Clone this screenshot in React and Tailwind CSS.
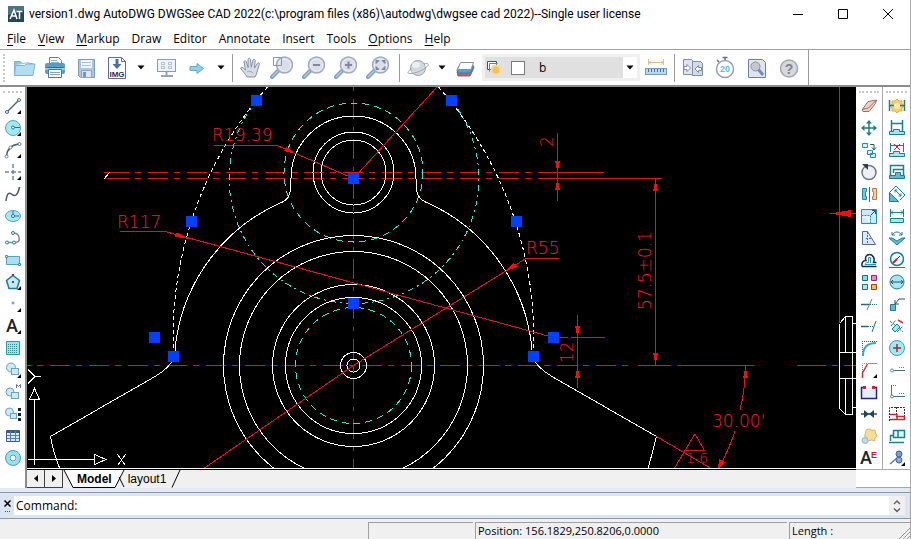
import React, { useState } from 'react';

const navy = '#4a6488';
const slate = '#6b7f9b';
const teal = '#1f7d8c';
const aqua = '#a5e6f5';
const sky = '#5cb8dc';

const Icon = ({ size = 18, children }) => (
  <svg
    width={size}
    height={size}
    viewBox={`0 0 ${size} ${size}`}
    fill="none"
    stroke={slate}
    className="shrink-0 overflow-visible"
    aria-hidden="true"
  >
    {children}
  </svg>
);

const Flyout = () => <path d="M17 13v4h-4z" fill="#000" stroke="none" />;

const Caret = () => (
  <svg width="8" height="5" viewBox="0 0 8 5" aria-hidden="true">
    <path d="M0.5 0.5h7L4 4.5z" fill="#000" />
  </svg>
);

const Lens = ({ children }) => (
  <Icon size={26}>
    <path d="M3 22l7-7" stroke="#7d9cc0" strokeWidth="4" strokeLinecap="round" />
    <path d="M3 22l6-6" stroke="#b4cbe3" strokeWidth="1.5" />
    <circle cx="15.5" cy="10" r="8" fill="#d8dde7" stroke="#a3aab8" strokeWidth="1.5" />
    <circle cx="15.5" cy="10" r="6" stroke="#eef1f6" />
    {children}
  </Icon>
);

/* ---------- main toolbar ---------- */

const FolderIcon = () => (
  <Icon size={26}>
    <path d="M3.5 20.5v-14h6l2 2h10v12z" fill="#8cc7e6" stroke="#7fb2d4" />
    <path d="M5 9.5l13-2v4H5z" fill="#f2f8fc" stroke="#9cc5df" />
    <path d="M3.5 20.5l1-10h9l1.5-1.5h9l-2 11.5z" fill="#b2def3" stroke="#7ab5d8" />
  </Icon>
);

const PrinterIcon = () => (
  <Icon size={26}>
    <path d="M7.5 9V2.5h9l3 3V9" fill="#fff" stroke="#5c86a8" />
    <path d="M9 5.5h6M9 7.5h8" stroke="#8fb4d0" />
    <rect x="3" y="8" width="20" height="11" rx="2" fill="#5b9cc3" stroke="none" />
    <rect x="3" y="13" width="20" height="2" fill="#8cd0ee" stroke="none" />
    <path d="M4.5 12.5h17" stroke="#3b6888" />
    <path d="M6.5 14.5h13v8h-13z" fill="#fff" stroke="#5d7389" />
    <path d="M8 17.5h10M8 19.5h10" stroke="#8d9eb0" />
  </Icon>
);

const SaveIcon = () => (
  <Icon size={26}>
    <path d="M5.5 4.5h16v18h-14l-2-2z" fill="#aac7e0" stroke="#7f98b5" />
    <rect x="8" y="5" width="11" height="8" fill="#f3f6f9" stroke="none" />
    <path d="M9 7.5h9M9 10.5h9" stroke="#b4c0cc" />
    <path d="M8.5 15.5h10v7h-10z" fill="#dde6ee" stroke="#8fa4bb" />
    <rect x="10" y="17" width="3" height="5" fill="#7396b8" stroke="none" />
  </Icon>
);

const ImageExportIcon = () => (
  <Icon size={26}>
    <path d="M4.5 2.5h13l4 4v17h-17z" fill="#fff" stroke="#5e6f8f" />
    <path d="M17.5 2.5v4h4" stroke="#5e6f8f" />
    <path d="M13 4v6" stroke="#4b6fa5" strokeWidth="3" />
    <path d="M8.5 9h9L13 14z" fill="#4b6fa5" stroke="none" />
    <text x="13" y="22" textAnchor="middle" fontSize="8" fill="#1d3260" stroke="none" className="font-['Liberation_Sans'] font-bold">IMG</text>
  </Icon>
);

const MonitorIcon = () => (
  <Icon size={26}>
    <rect x="4.5" y="4.5" width="18" height="12" fill="#edf2f8" stroke="#8c9bb2" />
    <path d="M13.5 17v4M8 21h12" stroke="#94a2b7" strokeWidth="2" />
    <path d="M8.5 7.5h3v2h-3zM15.5 7.5h3v2h-3zM8.5 11.5h3v2h-3zM15.5 11.5h3v2h-3z" stroke="#8794a9" strokeDasharray="1 1" />
  </Icon>
);

const ArrowIcon = () => (
  <Icon size={26}>
    <path d="M6 11.5h7V8.5l6.5 5-6.5 5v-3H6z" fill="#8dd3f1" stroke="#6aa6cb" />
  </Icon>
);

const HandIcon = () => (
  <Icon size={26}>
    <path
      d="M9 22c-1-3-5-6-6.5-9 1.5-1.5 3.5.5 5 2L6 7c.2-2 2-1.5 2.4 0l1.8 5.5L10 4.5c.3-1.8 2.2-1.5 2.5 0l.8 7.8 1.6-7c.5-1.6 2.4-1.2 2.3.4L16.5 13l2.8-4.6c1-1.3 2.5-.4 2 1L19 17c-.5 2-1 3.5-2 5z"
      fill="#d6dbe5"
      stroke="#8690a6"
    />
    <path d="M9 17c2-1 4-1 6 1" stroke="#a0a9ba" />
  </Icon>
);

const PlanetIcon = () => (
  <Icon size={26}>
    <circle cx="13" cy="13" r="7.5" fill="#d2d6de" stroke="#9ba1af" />
    <ellipse cx="11" cy="10" rx="4" ry="3" fill="#eceef2" stroke="none" />
    <path d="M6 14c-4 3-4 5 0 4.5 6-.5 15-5 17-8 1-2-1-2.5-4-1.5" stroke="#9ba1af" />
    <path d="M6 17c6 0 11-3 15-6" stroke="#dfe2e8" />
  </Icon>
);

const EraserLayerIcon = () => (
  <Icon size={26}>
    <path d="M3 17l3-5h14l-2 5-2 4H4z" fill="#b5626c" stroke="#9b5a66" />
    <path d="M3 15l2-4h15l-2 4-2 3H4z" fill="#4fa4cf" stroke="#3b7fa8" />
    <path d="M3.5 14.5l3-7h13l-2.5 7z" fill="#fff" stroke="#7a93ac" />
  </Icon>
);

const RulerIcon = () => (
  <Icon size={26}>
    <path d="M5.5 4v6M20.5 4v6M6 7.5h14M8 5.5l-2 2 2 2M18 5.5l2 2-2 2" stroke="#e5b98b" />
    <rect x="2.5" y="13.5" width="21" height="6" fill="#b3dbf2" stroke="#7c98c2" />
    <path d="M5.5 14v3M8.5 14v3M11.5 14v3M14.5 14v3M17.5 14v3M20.5 14v3" stroke="#4e6fa3" />
  </Icon>
);

const CompareIcon = () => (
  <Icon size={26}>
    <path d="M3.5 4.5h8l1 1v14h-9z" fill="#dfe5ee" stroke="#7f8eaa" />
    <path d="M12.5 6.5h8l2 2v12h-10z" fill="#d3dbe7" stroke="#7f8eaa" />
    <path d="M4 11.5h3v-2l3.5 3.5L7 16.5v-2H4z" fill="#fff" stroke="#7f8eaa" />
    <path d="M21.5 12.5h-3v-2L15 14l3.5 3.5v-2h3z" fill="#fff" stroke="#7f8eaa" />
  </Icon>
);

const StopwatchIcon = () => (
  <Icon size={26}>
    <path d="M13 2v3M10.5 2.5h5M5 5l2 2" stroke="#66738c" strokeWidth="1.5" />
    <circle cx="13" cy="14" r="8.5" fill="#fff" stroke="#95a0b4" strokeWidth="1.5" />
    <text x="13" y="17" textAnchor="middle" fontSize="9" fill="#5fbcec" stroke="none" className="font-['Liberation_Sans'] font-bold">20</text>
  </Icon>
);

const FindIcon = () => (
  <Icon size={26}>
    <path d="M4.5 4.5h14l3 3v15h-17z" fill="#dfe4ed" stroke="#6e7fa0" />
    <path d="M14 14l5 6" stroke="#6a90bd" strokeWidth="3" />
    <circle cx="11.5" cy="11.5" r="4.5" fill="#c3c7d0" stroke="#8b92a2" />
  </Icon>
);

const HelpIcon = () => (
  <Icon size={26}>
    <circle cx="13" cy="13.5" r="8.5" fill="#d6d8dd" stroke="#a5a7b0" strokeWidth="1.5" />
    <text x="13" y="19" textAnchor="middle" fontSize="14" fill="#7f8390" stroke="none" className="font-['Liberation_Sans'] font-bold">?</text>
  </Icon>
);

const LayerIcon = () => (
  <Icon size={18}>
    <path d="M2.5 2.5h9v8h-9z" fill="#fff" stroke="#40536f" />
    <path d="M4.5 12.5v-8h8" stroke="#6b7c96" />
    <circle cx="11" cy="11" r="5.5" fill="#f6dc9b" stroke="none" />
    <circle cx="11" cy="11" r="3.5" fill="#efc25f" stroke="none" />
  </Icon>
);

/* ---------- side toolbars, one entry per button ---------- */

const drawTools = [
  ['Line', <><path d="M3.5 14.5l11-11" stroke={navy} strokeWidth="1.5" /><circle cx="3" cy="15" r="1.5" fill="#fff" stroke={navy} /><circle cx="15" cy="3" r="1.5" fill="#fff" stroke={navy} /><Flyout /></>],
  ['Circle', <><circle cx="9" cy="9" r="7.5" fill="#9cecf8" stroke="#5f9fb8" /><path d="M9 8.5h7" stroke={navy} /><circle cx="9" cy="8.5" r="1.5" fill="#fff" stroke={navy} /><Flyout /></>],
  ['Arc', <><path d="M2.5 15C3 9 7 4 15 3" stroke="#555b6b" strokeWidth="1.5" /><circle cx="2.5" cy="15.5" r="1.5" fill="#fff" /><circle cx="6.5" cy="6.5" r="1.5" fill="#fff" /><circle cx="15.5" cy="3" r="1.5" fill="#fff" /><Flyout /></>],
  ['Center mark', <><path d="M1 9h4M7 9h5M14 9h3M9 1v4M9 7v4M9 13v4" stroke="#77829a" strokeWidth="1.5" /><Flyout /></>],
  ['Spline', <path d="M2 16C3 8 5 7 8 9.5S14 10 15.5 2" stroke="#4d566b" strokeWidth="1.5" />],
  ['Ellipse', <><ellipse cx="9" cy="9" rx="7.5" ry="5.5" fill="#9cecf8" stroke="#5f9fb8" /><path d="M9 9V4M9 9h6" stroke={navy} /><circle cx="9" cy="9" r="1.5" fill="#fff" stroke={navy} /></>],
  ['Polyline', <><path d="M3 13.5h9c5-1 4-9-2-9.5" stroke="#858b9f" strokeWidth="1.5" /><circle cx="3" cy="13.5" r="1.5" fill="#fff" stroke={teal} /><circle cx="10" cy="13.5" r="1.5" fill="#fff" stroke={teal} /><circle cx="9" cy="4" r="1.5" fill="#fff" stroke={teal} /></>],
  ['Rectangle', <><path d="M2.5 5.5h13v8h-13z" fill="#addcf3" stroke="#4aa5bd" /><path d="M1.5 4.5h2v2h-2zM14.5 12.5h2v2h-2z" fill="#fff" stroke="#2b9ab6" /></>],
  ['Polygon', <><path d="M9 2.5l6.5 5-2.5 8H5l-2.5-8z" fill="#bdeef8" stroke={teal} strokeWidth="1.5" /><path d="M8 1h2v2H8zM8 8h2v2H8z" fill="#c21e2c" stroke="none" /><Flyout /></>],
  ['Point', <><circle cx="9" cy="8" r="1" /><Flyout /></>],
  ['Text', <><text x="8" y="15" textAnchor="middle" fontSize="18" fill="#222" stroke="none" className="font-['Roboto'] font-medium">A</text><Flyout /></>],
  ['Hatch', <><path d="M2.5 2.5h13v13h-13z" fill="#8eeaf0" stroke="#2a9aa3" /><path d="M4 5.5h10M4 7.5h10M4 9.5h10M4 11.5h10M4 13.5h10" stroke="#3b8893" strokeDasharray="1 1" /></>],
  ['Block', <><circle cx="7" cy="6.5" r="4.5" fill="#c9eaf8" stroke="#6ea1c4" /><rect x="7.5" y="7.5" width="7" height="6" fill="#c9eaf8" stroke="#6ea1c4" /><Flyout /></>],
  ['Make block', <><circle cx="6" cy="9" r="4" fill="#c9eaf8" stroke="#6ea1c4" /><rect x="7.5" y="9.5" width="7" height="6" fill="#c9eaf8" stroke="#6ea1c4" /><path d="M12.5 5V1.5l2 2 2-2V5" stroke="#5d7391" /></>],
  ['Block attribute', <><circle cx="5.5" cy="7" r="4" fill="#c9eaf8" stroke="#6ea1c4" /><rect x="6.5" y="8.5" width="6" height="5" fill="#c9eaf8" stroke="#6ea1c4" /><path d="M14 3h3v3h-3zM14 8h3v3h-3zM14 13h3v3h-3z" fill="#222" stroke="none" /></>],
  ['Table', <><path d="M2.5 3.5h13v11h-13z" fill="#d6ebfa" stroke="#3d5b86" /><path d="M3 5h12" stroke="#3d5b86" strokeWidth="2" /><path d="M6.5 4v10M11.5 4v10M3 8.5h12M3 11.5h12" stroke="#5780b0" /></>],
  ['Donut', <><circle cx="9" cy="9" r="5.5" stroke="#8fe4f0" strokeWidth="4" /><circle cx="9" cy="9" r="7.5" stroke="#5298b3" /><circle cx="9" cy="9" r="3" fill="#fff" stroke="#5298b3" /></>],
];

const modifyTools = [
  ['Erase', <><path d="M2 13l6-8.5L16.5 3l-1 3.5-6.5 8H3z" fill="#f3cfc2" stroke="#94706a" /><path d="M2 12.5l6.5-1.5L16 3.5" stroke="#94706a" /></>],
  ['Move', <><path d="M9 3v12M3 9h12" stroke={teal} strokeWidth="1.5" /><path d="M9 1l3 3.5H6zM9 17l3-3.5H6zM1 9l3.5-3v6zM17 9l-3.5-3v6z" fill={teal} stroke="none" /></>],
  ['Copy', <><path d="M2.5 2.5h5v4h-5zM7.5 9.5h5v4h-5zM10.5 12.5h5v4h-5z" fill="#d4f2fb" stroke="#2a8ba2" /><path d="M10 3.5h4v5M12 6.5l2 2.5 2-2.5" stroke="#24556d" /></>],
  ['Rotate', <><circle cx="9" cy="9.5" r="7" fill="#eef0f5" stroke="#6b7890" strokeWidth="1.5" /><path d="M2 1h6v6z" fill="#2c3d55" stroke="none" /></>],
  ['Mirror', <><path d="M2.5 3.5h4v3h-1v5h1v3h-4z" fill="#67c9ed" stroke="#2786a8" /><path d="M16.5 3.5h-4v3h1v5h-1v3h4z" fill="#f6d08f" stroke="#b97a55" /><path d="M9.5 2v15" stroke="#4c6175" /></>],
  ['Scale', <><path d="M1.5 2.5h15v14h-15z" fill="#c5edf9" stroke="#278ea5" /><path d="M1.5 8.5h9v8" fill="#e9f1fa" stroke="#278ea5" strokeDasharray="2 1" /><path d="M11 8l4-4M12 3.5h3.5v3.5" stroke="#24556d" /></>],
  ['Stretch', <><path d="M2.5 15.5v-13h5l8 13z" fill="#d8eaf5" stroke="#506c8d" /><path d="M7.5 3v12M6 9.5h5" stroke="#506c8d" strokeDasharray="2 1" /></>],
  ['Offset', <><path d="M2 15.5h14.5M16.5 11.5h-3c2-4-1-8-4-8s-5 3-3.5 6c-3 0-4.5 2-4 6" stroke="#152a49" strokeWidth="1.5" /><path d="M16 13.5H5c0-1.5 1-2 3.5-2V6.5h2V12" stroke="#2b9ab6" /></>],
  ['Array', <><path d="M2.5 2.5h5v5h-5z" fill="#82dff0" stroke="#206b7d" /><path d="M11.5 2.5h5v5h-5z" fill="#fb7fc2" stroke="#8d2c62" /><path d="M2.5 11.5h5v5h-5z" fill="#b9e4ee" stroke="#206b7d" /><path d="M11.5 11.5h5v5h-5z" fill="#f7ba57" stroke="#8a4b1e" /></>],
  ['Trim', <><path d="M1 9.5h8" stroke="#2d647f" strokeWidth="1.5" /><path d="M10 9.5h7" stroke="#2d647f" strokeDasharray="1 1" /><path d="M12 4l-5 11" stroke="#5b8398" /></>],
  ['Extend', <><path d="M1 9.5h7" stroke="#2d647f" strokeWidth="1.5" /><path d="M8 9.5h6" stroke="#2d647f" strokeDasharray="1 1" /><path d="M16 4l-4 11" stroke="#2d647f" /></>],
  ['Fillet', <><path d="M2.5 17V2.5H17" stroke="#2d647f" strokeDasharray="1 1" /><path d="M3 17c0-9 5-13 13-13" stroke="#3ea9b7" strokeWidth="2" /></>],
  ['Chamfer', <><path d="M2.5 17V2.5H17" stroke="#888" strokeDasharray="1 1" /><path d="M2.5 17v-5l5-9" stroke="#c4323f" strokeWidth="1.5" /><path d="M8 2.5h9" stroke="#c9737b" /><Flyout /></>],
  ['Break', <><path d="M5 4.5H1.5v11h15v-11H13" fill="#e4eefa" stroke="#1c2b7e" strokeWidth="1.5" /><path d="M3 3h3v3H3zM12 3h3v3h-3z" fill="#dc1f2c" stroke="none" /></>],
  ['Join', <><path d="M1 9h16" stroke="#2c4a59" strokeWidth="1.5" /><path d="M4 5l5 4-5 4zM14 5L9 9l5 4z" fill="#1f4654" stroke="none" /></>],
  ['Explode', <><path d="M10 2l2 1.5 3-.5.5 3 1.5 3-2 2-.5 3-3-1-3 1-2-3-2-2 1-3 1-3.5z" fill="#f9dc96" stroke="#dfb262" /><circle cx="5" cy="13.5" r="3" fill="#b8def0" stroke="#94b6cb" /></>],
  ['Edit text', <><text x="6" y="15" textAnchor="middle" fontSize="18" fill="#222" stroke="none" className="font-['Roboto'] font-medium">A</text><text x="14" y="9" textAnchor="middle" fontSize="9" fill="#c71f2b" stroke="none" className="font-['Liberation_Sans'] font-bold">E</text></>],
];

const dimensionTools = [
  ['Smart dimension', <><path d="M9 2l2 2h3v3l2 2-2 2v3h-3l-2 2-2-2H4v-3L2 9l2-2V4h3z" fill="#f8cf6d" stroke="#dfae4e" /><circle cx="9" cy="9" r="3" fill="#fdeab5" stroke="none" /><path d="M1.5 3v11M16.5 3v11M2 8.5h4M12 8.5h4" stroke={teal} strokeWidth="1.5" /></>],
  ['Linear', <><path d="M3.5 1v11M14.5 1v11M4 4.5h10" stroke={teal} strokeWidth="1.5" /><path d="M1.5 15.5v-3h4v-2h6v2h5v3z" fill={aqua} stroke={teal} /></>],
  ['Break dimension', <><path d="M2.5 2v9M15.5 2v9M3 4.5h12" stroke={teal} /><path d="M6 3l6 6M12 3L6 9" stroke="#b6303a" /><path d="M1.5 15.5v-3h4v-2h6v2h5v3z" fill={aqua} stroke={teal} /></>],
  ['Baseline', <><path d="M2.5 12V2.5H15.5V12M5.5 10V6.5h10" stroke={teal} strokeWidth="1.5" /><path d="M1.5 15.5v-3h6v-3h5v3h4v3z" fill={sky} stroke={teal} /></>],
  ['Aligned', <><path d="M1.5 7.5l9 9h-9z" fill={sky} stroke={teal} /><path d="M2 7l6-6 9 9-5 5M7 5l6 6M7 7.5V5h2.5M10.5 11H13V8.5" stroke={teal} /></>],
  ['Ordinate', <><path d="M2.5 2v8M15.5 2v8M3 5.5h12M5 3.5l-2 2 2 2M13 3.5l2 2-2 2" stroke={teal} /><path d="M2.5 11.5h13v4h-13z" fill={aqua} stroke={teal} /></>],
  ['Angular', <><path d="M4 6c3-4 7-4 10 0M4 3v3h3M14 3v3h-3" stroke={teal} /><path d="M1 9l8 7 8-7h-3l-5 3-5-3z" fill={sky} stroke={teal} /></>],
  ['Radius', <><circle cx="9" cy="8" r="6.5" fill="#eafbff" stroke={teal} strokeWidth="1.5" /><path d="M9 8l-4 4" stroke="#bd1f2d" strokeWidth="2" /><path d="M9 8l3-3" stroke="#333" /><path d="M1 16.5h16" stroke={teal} /></>],
  ['Diameter', <><circle cx="9" cy="9" r="7" fill={aqua} stroke={teal} /><path d="M3 9h12M5 7L3 9l2 2M13 7l2 2-2 2" stroke="#265164" /></>],
  ['Leader', <><path d="M2.5 9.5h5v6h-5z" fill={sky} stroke={teal} /><path d="M7 9l4-5h6M7 5v4h4" stroke="#275065" /></>],
  ['Clean dimension', <><path d="M2 4l13 11M3 9l5-6M9 15l6-6" stroke={teal} strokeDasharray="3 1" /><path d="M10 3l5 3" stroke="#d53540" strokeWidth="1.5" /><path d="M4 12l5-5 3 3-5 5z" fill={aqua} stroke={teal} /></>],
  ['Center', <><circle cx="9" cy="9" r="7.5" fill="#9cecf8" stroke="#4a9bb0" /><path d="M9 5v8M5 9h8" stroke="#b8202d" strokeWidth="1.5" /></>],
  ['Tolerance', <><path d="M4 9.5h13" stroke="#49718c" /><circle cx="4" cy="9.5" r="1.5" fill="#fff" /><path d="M11 6.5h6" strokeDasharray="1 1" /></>],
  ['Datum', <><path d="M3.5 2v11M4 13.5h13" stroke="#49718c" /><circle cx="4" cy="13.5" r="1.5" fill="#fff" /><path d="M5 2.5h4M11 10.5h6" strokeDasharray="1 1" /></>],
  ['Continue', <><path d="M1.5 16V2.5h15V16M8.5 2v10" stroke="#333" strokeDasharray="2 1" /><path d="M2 9.5h7v5M2 14.5h14.5M9 11.5h7.5v3" stroke="#c22a36" strokeWidth="1.5" /></>],
  ['Dimension style', <><path d="M5.5 3.5h11v7h-11zM10 3.5v7" fill="#e4f8fc" stroke={teal} strokeWidth="1.5" /><path d="M2.5 8v6M2 8.5h4M1 15.5h15" stroke={teal} strokeWidth="1.5" /></>],
  ['Update', <><path d="M2 15l7-6" stroke="#69798c" strokeWidth="1.5" /><circle cx="11" cy="5" r="3" fill="#6f9fd0" stroke="#3d659b" /><circle cx="11" cy="11" r="3" fill="#7eabd7" stroke="#3d659b" /><Flyout /></>],
];

const SideBar = ({ label, tools, className }) => (
  <div role="toolbar" aria-label={label} className={`flex w-[27px] shrink-0 flex-col bg-white ${className}`}>
    <div className="mx-[3px] h-2 pt-1">
      <div className="border-t-2 border-dotted border-[#c8c8c8]" />
    </div>
    {tools.map(([name, art]) => (
      <button key={name} aria-label={name} className="flex h-[22px] shrink-0 items-center justify-center hover:bg-[#e5f1fb]">
        <Icon>{art}</Icon>
      </button>
    ))}
  </div>
);

const ToolButton = ({ label, wide, children }) => (
  <button
    aria-label={label}
    className={`flex h-8 shrink-0 items-center justify-center hover:bg-[#e5f1fb] ${wide ? 'w-8' : 'w-[31px]'}`}
  >
    {children}
  </button>
);

const CaretButton = ({ label }) => (
  <button aria-label={label} className="flex h-8 w-[18px] shrink-0 items-center justify-center hover:bg-[#e5f1fb]">
    <Caret />
  </button>
);

const Separator = () => <div className="mx-[2px] h-7 w-px shrink-0 bg-[#9a9a9a]" />;

/* ---------- drawing ---------- */

const grips = [
  [256, 100], [451, 100], [191, 221], [516, 221], [353, 178],
  [353, 303], [173, 356], [533, 356], [154, 337], [553, 337],
];

const Drawing = () => (
  <svg
    className="block h-full w-full"
    viewBox="27 87 829 381"
    preserveAspectRatio="xMinYMin slice"
    fill="none"
    role="img"
    aria-label="version1.dwg"
  >
    {/* center lines */}
    <g stroke="#e8101a">
      <path d="M109 172.5H539M109 178.5H539" strokeDasharray="20 6 6 7" />
      <path d="M104 172.5h5M104 178.5h5M539 172.5H604M539 178.5H662" />
      <path d="M11 365.5H635" strokeDasharray="20 6 6 7" />
      <path d="M638 365.5H671M677 365.5H753M797 365.5H826M832 365.5H838M844 365.5H857" />
      <path d="M353.5 87V469" strokeDasharray="4 8 20 8" />
      <path d="M557.5 133V201M577.5 315V388M655.5 178V365M839.5 87V323M833 213.5H857" />
      <path d="M214 145.5H277M120 231.5H165M553 337.5H568M571 337.5H605M526 258.5H559" />
    </g>

    <g shapeRendering="crispEdges">
      {/* hidden circles */}
      <g stroke="#3fe0d8" strokeDasharray="7 5">
        <circle cx="353.5" cy="172.5" r="69.5" />
        <circle cx="353.5" cy="365.5" r="58" />
        <path d="M256.5 100.5A125 125 0 0 0 353.5 303.5A125 125 0 0 0 451.5 100.5" strokeDasharray="6 4 2 4" />
      </g>

      {/* outlines */}
      <g stroke="#fff">
        <circle cx="353.5" cy="172.5" r="32.5" />
        <circle cx="353.5" cy="172.5" r="40.5" />
        <circle cx="353.5" cy="365.5" r="130" />
        <circle cx="353.5" cy="365.5" r="114" />
        <circle cx="353.5" cy="365.5" r="81" />
        <circle cx="353.5" cy="365.5" r="68" />
        <circle cx="353.5" cy="365.5" r="13" />
        <circle cx="353.5" cy="365.5" r="6.5" />
        <path d="M60 469Q54 455 50.5 436.5L155 376.5Q171 367 174.5 356.5A179 179 0 0 1 283.5 201.5Q290 198 290.5 189L291 178.5A62.5 62.5 0 0 1 416 178.5V187Q417 198 424.5 201.5A179 179 0 0 1 532.5 356.5Q536 367 552 376.5L656.5 436.5L648 469" />
        <path d="M267.5 87A380 380 0 0 0 173.5 356.5M438.5 87A380 380 0 0 1 533.5 356.5" strokeDasharray="4 3" />
        <path d="M104 179l6-7" />
        <path d="M839.5 323.5L845.5 316.5H852.5V414.5H845.5L839.5 408.5V323.5M845.5 316.5V352.5M845.5 378.5V414.5M839.5 352.5H857M839.5 378.5H857M852.5 323.5H857M852.5 407.5H857" />
      </g>

      {/* leaders and arcs */}
      <g stroke="#e8101a">
        <path d="M277 145.5L353.5 178.5L437 87M165 231.5L553.5 337.5M526 258.5L353.5 365.5L203 469" />
        <path d="M656.5 436.5L712 469M674 469L695 434L704.5 450.5H685.5" />
        <path d="M745.5 366Q745 390 740 410M735 431Q729 450 718 469" />
      </g>

      {/* arrow heads */}
      <g fill="#f01010">
        <path d="M296 154L284 151L286 146.5Z" />
        <path d="M190 239L175 237L176.5 232.5Z" />
        <path d="M504 272L513 263L517 267Z" />
        <path d="M557.5 172L555 161H560Z M557.5 179L555 190H560Z" />
        <path d="M577.5 337L575 326H580Z M577.5 366L575 378H580Z" />
        <path d="M655.5 179L653 191H658Z M655.5 365L653 353H658Z" />
        <path d="M745.5 366L743 378H748Z M718 469L719 459L725 462Z" />
        <path d="M830 213.5L851 210V217Z" />
      </g>
    </g>

    <g fill="#ff1a22" fontSize="17" className="font-['DejaVu_Sans_Light','DejaVu_Sans',sans-serif] font-extralight">
      <text x="212" y="141">R19.39</text>
      <text x="117" y="228">R117</text>
      <text x="526" y="254">R55</text>
      <text x="712" y="427">30.00'</text>
      <text x="686" y="463" fontSize="14">1.6</text>
      <text transform="translate(553 147) rotate(-90)">2</text>
      <text transform="translate(573 363) rotate(-90)">12</text>
      <text transform="translate(651 310) rotate(-90)">57.5±0.1</text>
    </g>

    {/* UCS marker */}
    <g stroke="#fff" shapeRendering="crispEdges">
      <path d="M28 369.5L35 376.5L28 383.5M35 376.5H41" />
      <path d="M34.5 465V399.5M34.5 388.5L29.5 399.5H39.5Z" />
      <path d="M28 459.5H94M94.5 454.5V464.5L106 459.5Z" />
      <path d="M117.5 454.5L125.5 465.5M125.5 454.5L117.5 465.5" />
    </g>

    <g fill="#0040ff">
      {grips.map(([x, y]) => (
        <rect key={`${x}-${y}`} x={x - 5} y={y - 5} width="11" height="11" />
      ))}
    </g>
  </svg>
);

/* ---------- window ---------- */

const TitleBar = () => (
  <header className="flex h-7 shrink-0 items-center pl-2">
    <svg width="16" height="16" viewBox="0 0 16 16" className="mr-[5px] shrink-0" aria-hidden="true">
      <rect width="16" height="16" fill="#274653" />
      <path d="M0 0h16v4L0 9z" fill="#4c7383" />
      <path d="M2 13L6 4l3 9M4 10h4M8.5 5.5h6M11.5 5.5V13" stroke="#fff" strokeWidth="1.5" fill="none" />
    </svg>
    <h1 className="truncate font-['Roboto',sans-serif]">
      version1.dwg AutoDWG DWGSee CAD 2022(c:\program files (x86)\autodwg\dwgsee cad 2022)--Single user license
    </h1>
    <div className="ml-auto flex h-full">
      <button aria-label="Minimize" className="flex w-[45px] items-center justify-center hover:bg-[#e5e5e5]">
        <svg width="10" height="10" aria-hidden="true"><path d="M0 5.5h10" stroke="#000" /></svg>
      </button>
      <button aria-label="Maximize" className="flex w-[45px] items-center justify-center hover:bg-[#e5e5e5]">
        <svg width="10" height="10" aria-hidden="true"><path d="M0.5 0.5h9v9h-9z" stroke="#000" fill="none" /></svg>
      </button>
      <button aria-label="Close" className="flex w-[45px] items-center justify-center hover:bg-[#e81123]">
        <svg width="10" height="10" aria-hidden="true"><path d="M0 0l10 10M10 0L0 10" stroke="#000" /></svg>
      </button>
    </div>
  </header>
);

// [underlined letter, rest]
const menus = [
  ['F', 'ile'], ['V', 'iew'], ['M', 'arkup'], ['', 'Draw'], ['', 'Editor'],
  ['', 'Annotate'], ['', 'Insert'], ['', 'Tools'], ['O', 'ptions'], ['H', 'elp'],
];

const MenuBar = () => (
  <nav className="flex h-[21px] shrink-0 items-center gap-3 pl-[7px]">
    {menus.map(([key, rest]) => (
      <button key={key + rest} className="hover:bg-[#e5f3ff]">
        {key && <span className="underline underline-offset-2">{key}</span>}
        {rest}
      </button>
    ))}
  </nav>
);

const MainToolbar = () => (
  <div role="toolbar" aria-label="Standard" className="flex h-[38px] shrink-0 items-center border-t border-b-2 border-t-[#a0a0a0] border-b-[#8c8c8c] pl-[3px]">
    <div className="mr-[3px] h-7 border-l-2 border-dotted border-[#c4ccd8]" />
    <ToolButton label="Open"><FolderIcon /></ToolButton>
    <ToolButton label="Print"><PrinterIcon /></ToolButton>
    <ToolButton label="Save"><SaveIcon /></ToolButton>
    <ToolButton label="Export image"><ImageExportIcon /></ToolButton>
    <CaretButton label="Export options" />
    <ToolButton label="Full screen"><MonitorIcon /></ToolButton>
    <ToolButton label="Next"><ArrowIcon /></ToolButton>
    <CaretButton label="Next options" />
    <Separator />
    <ToolButton label="Pan"><HandIcon /></ToolButton>
    <ToolButton label="Zoom window" wide>
      <Lens><path d="M4.5 2.5h8v8h-8z" stroke="#8d99ad" /></Lens>
    </ToolButton>
    <ToolButton label="Zoom out" wide>
      <Lens><path d="M12 10h7" stroke="#7b88a0" strokeWidth="2" /></Lens>
    </ToolButton>
    <ToolButton label="Zoom in" wide>
      <Lens><path d="M12 10h7M15.5 6.5v7" stroke="#7b88a0" strokeWidth="2" /></Lens>
    </ToolButton>
    <ToolButton label="Zoom extents" wide>
      <Lens><path d="M11 5.5h3l-3 3zM20 5.5v3l-3-3zM11 14.5v-3l3 3zM20 14.5h-3l3-3z" fill="#7b88a0" stroke="#7b88a0" /></Lens>
    </ToolButton>
    <div className="w-[3px]" />
    <Separator />
    <ToolButton label="Orbit"><PlanetIcon /></ToolButton>
    <CaretButton label="Orbit options" />
    <ToolButton label="Clear layer"><EraserLayerIcon /></ToolButton>
    <div className="relative flex h-[27px] w-[158px] shrink-0 items-center bg-[#f0f0f0] p-[3px]">
      <div className="flex h-full min-w-0 flex-1 items-center bg-[#e0e0e0]">
        <LayerIcon />
        <span className="ml-2 h-[14px] w-[14px] shrink-0 border border-[#7a7a7a] bg-white" />
        <select aria-label="Layer" defaultValue="b" className="h-full min-w-0 flex-1 appearance-none bg-transparent pl-[14px] outline-none">
          <option>b</option>
          <option>0</option>
        </select>
      </div>
      <span className="pointer-events-none absolute right-[3px] flex h-[21px] w-[14px] items-center justify-center bg-white">
        <Caret />
      </span>
    </div>
    <ToolButton label="Measure" wide><RulerIcon /></ToolButton>
    <Separator />
    <ToolButton label="Compare" wide><CompareIcon /></ToolButton>
    <ToolButton label="Recent" wide><StopwatchIcon /></ToolButton>
    <ToolButton label="Find" wide><FindIcon /></ToolButton>
    <ToolButton label="Help" wide><HelpIcon /></ToolButton>
    <div className="ml-[3px] h-full w-px bg-[#9a9a9a]" />
  </div>
);

const SheetTabs = ({ active, onSelect }) => (
  <div className="flex h-[19px] shrink-0 border-t border-black bg-[#f0f0f0] font-['Liberation_Sans',sans-serif]">
    {['M5 0v7L1 3.5z', 'M1 0v7l4-3.5z'].map((d, i) => (
      <button
        key={d}
        aria-label={i ? 'Next sheet' : 'Previous sheet'}
        className="flex w-[18px] items-center justify-center border-r border-b border-[#404040]"
      >
        <svg width="6" height="7" aria-hidden="true"><path d={d} fill="#000" /></svg>
      </button>
    ))}
    <div className="relative flex">
      <svg width="120" height="18" className="absolute left-0 top-0" aria-hidden="true">
        <path d="M1 0L10 17.5H52L61 0z" fill="#fff" />
        <path d="M1 0L10 17.5H52L61 0M56 7l5 10M117 0L109 17.5" stroke="#000" fill="none" />
      </svg>
      <button onClick={() => onSelect('Model')} aria-pressed={active === 'Model'} className="relative pl-[14px] font-bold">Model</button>
      <button onClick={() => onSelect('layout1')} aria-pressed={active === 'layout1'} className="relative pl-4">layout1</button>
    </div>
  </div>
);

const CommandLine = () => (
  <div className="flex h-[27px] shrink-0 items-center border-y border-[#8d99a9] bg-[#dbe5f2] py-[3px] pr-[5px]">
    <button aria-label="Close command line" className="flex w-[14px] shrink-0 flex-col items-center gap-1">
      <svg width="7" height="7" aria-hidden="true"><path d="M0.5 0.5l6 6M6.5 0.5l-6 6" stroke="#000" strokeWidth="1.5" /></svg>
      <span className="w-[5px] border-t border-dotted border-[#555]" />
    </button>
    <div className="flex h-full flex-1 items-center bg-white pl-[2px]">
      <label htmlFor="command">Command:</label>
      <input id="command" className="h-full min-w-0 flex-1 bg-white px-1 outline-none" />
      <button aria-label="Scroll history" className="flex h-full w-4 items-center justify-center bg-[#f0f0f0]">
        <svg width="8" height="14" aria-hidden="true">
          <path d="M1 5l3-3 3 3M1 9.5l3 3 3-3" stroke="#666" strokeWidth="1.5" fill="none" />
        </svg>
      </button>
    </div>
  </div>
);

const StatusBar = () => (
  <footer className="flex h-5 shrink-0 gap-[2px] bg-[#f0f0f0] pt-[3px] text-[11px]">
    <div className="flex-1" />
    <div className="w-[105px] border-t border-l border-[#a0a0a0]" />
    <div className="flex w-[312px] items-center border-t border-l border-[#a0a0a0] pl-[2px]">Position: 156.1829,250.8206,0.0000</div>
    <div className="flex w-[121px] items-center justify-between border-t border-l border-[#a0a0a0] pl-[2px]">
      Length :
      <svg width="12" height="12" className="self-end" aria-hidden="true">
        <path d="M1 12L12 1M5 12l7-7M9 12l3-3" stroke="#999" />
      </svg>
    </div>
  </footer>
);

export default function App() {
  const [sheet, setSheet] = useState('Model');

  return (
    <div className="flex h-screen flex-col overflow-hidden border-r border-[#a8a8a8] bg-white font-['Open_Sans','Noto_Sans',sans-serif] text-[12px] leading-4 text-black">
      <TitleBar />
      <MenuBar />
      <MainToolbar />
      <div className="flex min-h-0 flex-1">
        <SideBar label="Draw" tools={drawTools} className="border-r-2 border-[#8c8c8c]" />
        <main className="flex min-w-0 flex-1 flex-col">
          <div className="mb-px min-h-0 flex-1 overflow-hidden bg-black">
            <Drawing />
          </div>
          <SheetTabs active={sheet} onSelect={setSheet} />
        </main>
        <div className="flex flex-col bg-white">
          <div className="flex">
            <SideBar label="Modify" tools={modifyTools} className="border-r border-[#a8a8a8]" />
            <SideBar label="Dimension" tools={dimensionTools} className="" />
          </div>
          <div className="flex-1 border-y border-[#a8a8a8]" />
        </div>
      </div>
      <div className="h-1 shrink-0 bg-[#e2e9f2]" />
      <CommandLine />
      <StatusBar />
    </div>
  );
}
